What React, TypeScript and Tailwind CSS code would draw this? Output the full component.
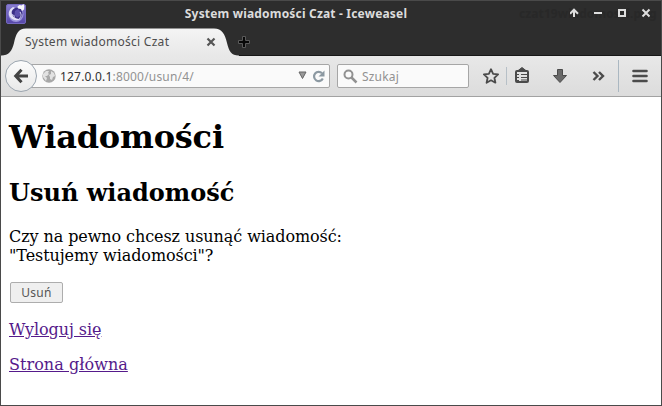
import type { ReactNode } from "react";

function Logo() {
  return (
    <svg width="20" height="21" viewBox="0 0 20 21" className="shrink-0">
      <defs>
        <linearGradient id="logo" x1="0" y1="0" x2="0" y2="1">
          <stop offset="0" stopColor="#8a7fd2" />
          <stop offset="1" stopColor="#5546a8" />
        </linearGradient>
      </defs>
      <rect x="0.5" y="1.5" width="19" height="19" rx="1.5" fill="url(#logo)" stroke="#7468bd" />
      <circle cx="10" cy="11.5" r="7.500" fill="#9b94dc" />
      <circle cx="10.500" cy="10.500" r="6" fill="#3b2f86" />
      <path d="M7 4C2 7 2 12 4.500 14.500C7 17.500 11 18 14.500 16C11 16 7.500 14.500 6.500 12C5 9.500 5.500 7 9 5Z" fill="#e3e1f7" />
      <path d="M9 8l3-2 3 3-1 4-3 1.500-2.500-2.500z" fill="#5c50ad" />
      <path d="M3 10.500c2 1 4 1 6 3M14 9c2 3 1 5-1 7" stroke="#d7d5f3" fill="none" />
      <path d="M11.500 3.500l2-1.500 2 .5 2-1.500.8 2-.3 3.500-2 1.500-1-2-3-.5z" fill="#f7f7fb" />
    </svg>
  );
}

function TitleBar() {
  return (
    <div className="relative flex h-[27px] items-center justify-center text-[12px] font-bold leading-[17px] text-[#dcdcdc]">
      <div className="absolute left-[5px] top-[2px]"><Logo /></div>
      <span className="relative -left-[35px] -top-px whitespace-nowrap tracking-[0.18px]">System wiadomości Czat - Iceweasel</span>
      <span className="absolute left-[518px] top-[4px] whitespace-nowrap tracking-[0.1px] text-[#282828]">czat19wiadomosci.png</span>
      <svg className="absolute right-[7px] top-[7px]" width="84" height="10" viewBox="0 0 84 10" fill="none" stroke="#dedede" strokeWidth="2">
        <path d="M4 9V2M0 5.700L4 1.700L8 5.700" />
        <path d="M24 5h8" />
        <path d="M49 2h6v6h-6z" />
        <path d="M72.500 1.500l7 7M79.500 1.500l-7 7" />
      </svg>
    </div>
  );
}

function TabStrip() {
  return (
    <div className="relative h-[28px]">
      <svg className="absolute left-0 top-0" width="660" height="28" viewBox="0 0 660 28">
        <defs>
          <linearGradient id="tab" x1="0" y1="0" x2="0" y2="1">
            <stop offset="0" stopColor="#f4f4f4" />
            <stop offset="1" stopColor="#e8e8e8" />
          </linearGradient>
        </defs>
        <path d="M0 27.500H660" stroke="#171717" />
        <path d="M0 28V27.500C8 27.500 11 23 13 15C15 6 17 .5 25 .5H213C221 .5 224 6 226 15C228 23 230 27.500 238 27.500V28Z" fill="url(#tab)" />
        <path d="M206.500 10.500l7 7M213.500 10.500l-7 7" stroke="#555" strokeWidth="2.200" />
        <path d="M241.500 8.500h3v4h4v3h-4v4h-3v-4h-4v-3h4z" fill="#080808" stroke="#5a5a5a" />
      </svg>
      <span className="relative left-[24px] top-[5px] block whitespace-nowrap text-[12px] leading-[17px] tracking-[0.27px] text-[#4d4d4d]">System wiadomości Czat</span>
    </div>
  );
}

function Field({ className, children }: { className: string; children: ReactNode }) {
  return (
    <div className={"flex h-[24px] shrink-0 items-center rounded-[2px] border border-[#a6a6a6] bg-[#fafafa] " + className}>
      {children}
    </div>
  );
}

function Toolbar() {
  return (
    <div className="relative flex h-[41px] items-center border-b border-[#a2a2a2] bg-linear-to-b from-[#e8e8e8] to-[#dcdcdc] text-[12px] leading-[17px]">
      <Field className="ml-[20px] w-[309px]">
        <svg className="ml-[20px]" width="14" height="14" viewBox="0 0 14 14">
          <circle cx="7" cy="7" r="6.700" fill="#a8a8a8" />
          <path d="M1 5l3-3 3 0-1 2 1 1-2 2-2 0 2 2-1 3-3-4zM9 2l3 2 1 3-2 1-1 3-2-1 0-2-1-2 2-1z" fill="#e2e2e2" />
        </svg>
        <span className="ml-[4px] flex-1 whitespace-nowrap tracking-[0.19px] text-[#929292]"><span className="text-[#303030]">127.0.0.1</span>:8000/usun/4/</span>
        <svg width="31" height="14" viewBox="0 0 31 14">
          <path d="M1 3h7L4.500 9.500z" fill="#999" stroke="#666" />
          <path d="M24 4.300A4.600 4.600 0 1 0 24.800 9.500" fill="none" stroke="#8c99a2" strokeWidth="2.200" />
          <path d="M26.500 1.500v6h-6z" fill="#8c99a2" />
        </svg>
      </Field>
      <Field className="ml-[7px] w-[132px]">
        <svg className="ml-[5px]" width="15" height="15" viewBox="0 0 15 15" fill="none" stroke="#929292">
          <circle cx="5.500" cy="5.500" r="4" strokeWidth="2" />
          <path d="M8.500 8.500l5 5" strokeWidth="2.500" />
        </svg>
        <span className="ml-[4px] tracking-[0.19px] text-[#929292]">Szukaj</span>
      </Field>
      <svg className="ml-[14px] shrink-0" width="178" height="40" viewBox="0 0 178 40" fill="none" stroke="#4b4b4b">
        <path d="M8 13.200l2.100 4.600 5 .6-3.700 3.400 1 4.900L8 24.300l-4.400 2.400 1-4.900L.9 18.400l5-.6z" strokeWidth="1.800" strokeLinejoin="round" />
        <path d="M23.500 11v18" stroke="#b7c0c7" />
        <rect x="33" y="15" width="12" height="11" rx="1" strokeWidth="2" />
        <path d="M34.500 15l4.500-3.500 4.500 3.500" fill="#4b4b4b" />
        <path d="M34 18.500h2M34 21.500h2M34 24.500h2M38 18.500h7M38 21.500h7M38 24h7" />
        <path d="M74.500 13.500h5v6h4L77 26.500l-6.500-7h4z" fill="#696969" />
        <path d="M110.500 16l4 4-4 4M116 16l4 4-4 4" strokeWidth="2.400" />
        <path d="M135.500 4v32" stroke="#aab7c1" />
        <path d="M150.500 15h13M150.500 20h13M150.500 25h13" strokeWidth="2.600" strokeLinecap="round" />
      </svg>
      <div className="absolute left-[4px] top-[4px] flex size-[32px] items-center justify-center rounded-full border border-[#9ba5af] bg-linear-to-b from-[#fcfcfc] to-[#e9e9e9]">
        <svg width="16" height="16" viewBox="0 0 16 16" fill="none" stroke="#444" strokeWidth="3">
          <path d="M8.500 1.800L2.700 8l5.800 6.200M3 8h12" />
        </svg>
      </div>
    </div>
  );
}

export default function App() {
  return (
    <div className="flex h-[406px] w-[662px] flex-col overflow-hidden border border-[#4a4a4a] bg-[#2d2d2d] font-['Noto_Sans',sans-serif]">
      <TitleBar />
      <TabStrip />
      <Toolbar />
      <main className="flex-1 bg-white pl-[8px] pt-[21px] font-['DejaVu_Serif',serif] text-[16px] leading-[19px] text-black">
        <h1 className="text-[32px] font-bold leading-[38px] tracking-[-0.2px]">Wiadomości</h1>
        <h2 className="mt-[23px] text-[24px] font-bold leading-[28px]">Usuń wiadomość</h2>
        <p className="mt-[20px] tracking-[-0.08px]">Czy na pewno chcesz usunąć wiadomość:<br />"Testujemy wiadomości"?</p>
        <button className="ml-px mt-[17px] block h-[21px] w-[53px] rounded-[2px] border border-[#adadad] bg-[#efefef] font-['Noto_Sans',sans-serif] text-[12px] leading-[17px] tracking-[0.25px] text-[#555]">Usuń</button>
        <p className="mt-[17px] tracking-[-0.08px]"><a href="#" className="text-[#551a8b] underline">Wyloguj się</a></p>
        <p className="mt-[16px] tracking-[0.05px]"><a href="#" className="text-[#551a8b] underline">Strona główna</a></p>
      </main>
    </div>
  );
}
